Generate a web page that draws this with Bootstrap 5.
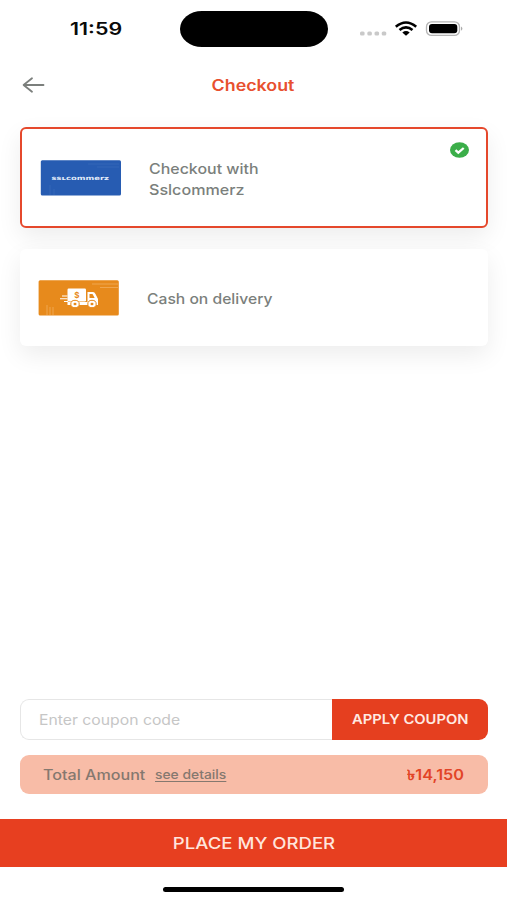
<!DOCTYPE html>
<html lang="en">
<head>
<meta charset="utf-8">
<meta name="viewport" content="width=device-width, initial-scale=1">
<title>Checkout</title>
<link href="https://cdn.jsdelivr.net/npm/bootstrap@5.3.0/dist/css/bootstrap.min.css" rel="stylesheet">
<style>
body{font-family:Inter,"Liberation Sans",sans-serif;background:#fff;color:#7b7f7c;overflow:hidden}
.screen{height:900px}
.wide{display:inline-block;white-space:nowrap;transform:scaleX(var(--sx,1.16));transform-origin:left center}
.wide-c{transform-origin:center}
.wide-r{transform-origin:right center}
.statusbar{height:59px;padding:11px 41px 0 70px}
.clock{font-size:17px;font-weight:600;color:#0a0a0a;line-height:37px;width:110px}
.clock .wide{--sx:1.26}
.island{width:148px;height:36px;border-radius:22px/18px;background:#000}
.signal{margin-left:32px}
.topbar{height:52px;padding:0 22px}
.topbar svg,.topbar .spacer{width:24px}
.page-name{--sx:1.15;font-size:15.5px;font-weight:600;color:#e8502f;padding-top:2px;margin-right:1px}
.methods{padding:16px 19px 0 20px;gap:21px}
.pay{height:97px;border:0;border-radius:6px;box-shadow:0 9px 24px rgba(0,0,0,.075);padding:2px 0 0 18px;font-size:14.5px;line-height:21px;font-weight:500;color:#7b7f7c}
.pay.chosen{height:101px;border:2px solid #e5482c}
.pay svg.brand{width:81px;height:36px;margin:-2px 28px 0 0}
.pay-a{--sx:1.1}
.pay-b{--sx:1.11}
.pay-c{--sx:1.08}
.tick{position:absolute;right:17px;top:13px}
.coupon{height:41px}
.coupon .entry{--sx:1.125;border:1px solid #e6e6e6;border-right:0;border-radius:9px 0 0 9px;padding-left:18px;font-size:14px;color:#c6c6c6}
.coupon .apply{--sx:1.135;width:156px;border:0;border-radius:0 9px 9px 0;background:#e53f1f;color:#ffeae2;font-size:13px;font-weight:600;padding:1px 0 0}
.total{height:39px;border-radius:9px;background:#f8bca7;padding:0 24px 0 23px;font-size:14px;font-weight:500;color:#85786f}
.total-name{--sx:1.15;width:112px}
.details{--sx:1.11;font-size:12.5px;text-decoration:underline;text-underline-offset:2px;padding-top:1px}
.sum{color:#e24427;font-weight:600;font-size:14px}
.actions{padding:0 19px 25px 20px;gap:15px}
.order{height:48px;background:#e73f20;border:0;border-radius:0;color:#ffe5dc;font-size:16px;font-weight:500}
.homebar{height:33px;padding-top:20px}
.home{width:181px;height:5px;border-radius:3px;background:#000}
</style>
<script src="https://cdn.jsdelivr.net/npm/bootstrap@5.3.0/dist/js/bootstrap.bundle.min.js"></script>
</head>
<body>
<div class="screen d-flex flex-column">
  <header class="statusbar d-flex align-items-start">
    <div class="clock flex-shrink-0"><span class="wide">11:59</span></div>
    <div class="island flex-shrink-0"></div>
    <svg class="signal flex-shrink-0" width="106" height="36" viewBox="0 0 106 36">
      <g fill="#c9c9c9"><rect x="0" y="20.6" width="4.6" height="3.8" rx="1.5"/><rect x="7.3" y="20.6" width="4.6" height="3.8" rx="1.5"/><rect x="14.5" y="20.6" width="4.6" height="3.8" rx="1.5"/><rect x="21.7" y="20.6" width="4.6" height="3.8" rx="1.5"/></g>
      <g fill="none" stroke="#000" stroke-width="2.6"><path d="M35.8 15.8Q46 7.2 56.2 15.8"/><path d="M39.5 19.1Q46 13.6 52.5 19.1"/></g>
      <path d="M42.3 21.5Q46 18.7 49.7 21.5L46 24.7Z"/>
      <rect x="66.5" y="10.8" width="33" height="13.6" rx="5" fill="#fff" stroke="#b4b4b4" stroke-width="1.3"/>
      <rect x="69" y="13" width="28.3" height="9.3" rx="3" fill="#000"/>
      <path d="M101.2 15.5Q103.5 17.6 101.2 19.7Z" fill="#999"/>
    </svg>
  </header>
  <nav class="topbar d-flex align-items-center justify-content-between">
    <svg height="18" viewBox="0 0 24 18" fill="none" stroke="#7b7f7c" stroke-width="1.8" stroke-linecap="round" stroke-linejoin="round"><path d="M21.500 9H2M10 2.200L1.600 9L10 15.800"/></svg>
    <span class="page-name wide wide-c">Checkout</span>
    <span class="spacer"></span>
  </nav>
  <main class="d-flex flex-column flex-grow-1">
    <section class="methods d-flex flex-column">
      <div class="card pay chosen flex-row align-items-center">
        <svg class="brand" viewBox="0 0 81 36">
          <rect x=".8" y=".3" width="80.200" height="35.300" rx="1.500" fill="#275cb2"/>
          <path d="M48 4H79M57 7H79M10 25V35M14 29V35" stroke="#3969b9" stroke-width=".8"/>
          <text x="11.500" y="20" textLength="57.500" lengthAdjust="spacingAndGlyphs" font-family="DejaVu Sans" font-size="5.600" font-weight="700" fill="#e4edfa">ssʟcommerz</text>
        </svg>
        <div><span class="wide pay-a">Checkout with</span><br><span class="wide pay-b">Sslcommerz</span></div>
        <svg class="tick" width="19" height="16" viewBox="0 0 19 16"><ellipse cx="9.5" cy="8" rx="9.5" ry="7.8" fill="#3bae49"/><path d="M5.500 8.200L8.300 10.700L13.700 6" fill="none" stroke="#fff" stroke-width="2.300"/></svg>
      </div>
      <div class="card pay flex-row align-items-center">
        <svg class="brand" viewBox="0 0 81 36">
          <rect x=".6" y=".3" width="80.200" height="35.300" rx="1.500" fill="#e78a1c"/>
          <path d="M54 4H80M62 7.500H80M9 25V35M12 27V35M15 27V35" stroke="#efa64f" stroke-width="1"/>
          <g fill="#fff"><rect x="29.500" y="8.500" width="18.500" height="13" rx="1.200"/>
          <path d="M49.500 12H55Q56.500 12 57.500 14L60 19V25H29.500V22H49.500Z"/></g>
          <path d="M51.500 14H54.500L56.700 18H51.500Z" fill="#e78a1c"/>
          <path d="M24 16H29.500M22 18.700H29.500M26 21.500H30" stroke="#fff" stroke-width="1.100"/>
          <g fill="#fff" stroke="#e78a1c" stroke-width="1"><ellipse cx="37" cy="24" rx="4.200" ry="3.700"/><ellipse cx="54" cy="24" rx="4.200" ry="3.700"/></g>
          <g fill="#e78a1c"><ellipse cx="37" cy="24" rx="1.500" ry="1.300"/><ellipse cx="54" cy="24" rx="1.500" ry="1.300"/>
          <text x="38.800" y="17.800" text-anchor="middle" font-family="Inter" font-size="8" font-weight="700">$</text></g>
        </svg>
        <span class="wide pay-c">Cash on delivery</span>
      </div>
    </section>
    <section class="actions mt-auto d-flex flex-column">
      <div class="coupon d-flex">
        <div class="entry flex-grow-1 d-flex align-items-center"><span class="wide">Enter coupon code</span></div>
        <button class="btn apply"><span class="wide wide-c">APPLY COUPON</span></button>
      </div>
      <div class="total d-flex align-items-center">
        <span class="wide total-name">Total Amount</span>
        <span class="wide details">see details</span>
        <span class="wide wide-r sum ms-auto">৳14,150</span>
      </div>
    </section>
  </main>
  <button class="btn order w-100 flex-shrink-0"><span class="wide wide-c">PLACE MY ORDER</span></button>
  <footer class="homebar d-flex justify-content-center flex-shrink-0"><div class="home"></div></footer>
</div>
</body>
</html>
